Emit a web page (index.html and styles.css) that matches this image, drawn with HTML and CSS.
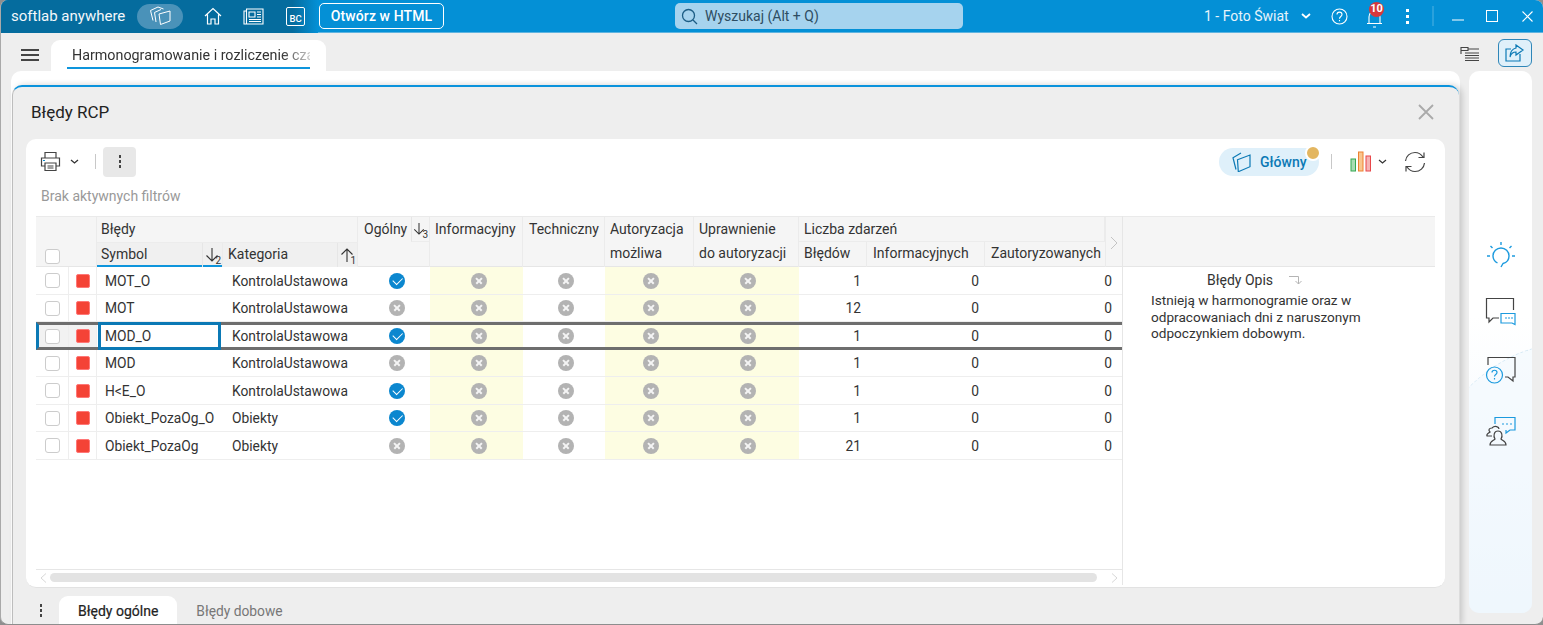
FILE: index.html
```html
<!DOCTYPE html>
<html lang="pl">
<head>
<meta charset="utf-8">
<title>Błędy RCP</title>
<link rel="stylesheet" href="styles.css">
</head>
<body>
<div class="app">
  <header class="titlebar">
    <div class="brand-zone">
      <span class="brand">softlab anywhere</span>
      <span class="pill-icon"><svg width="21" height="20" viewBox="0 0 21 20" fill="none" stroke="#fff" stroke-width="1"><path d="M9 8l11-3v10l-9.500 3.500zM6 16L4.500 6.500 11 3.500M3 14.500L0.500 4.500 8 1l5.500 2"/></svg></span>
      <svg class="ic-home" width="18" height="18" viewBox="0 0 18 18" fill="none" stroke="#fff" stroke-width="1.200"><path d="M1 9l8-7.500L17 9M3.500 7.500V17h3.500v-5h4v5h3.500V7.500"/></svg>
      <svg class="ic-news" width="21" height="17" viewBox="0 0 21 17" fill="none" stroke="#fff" stroke-width="1.100"><path d="M3.500 1H20v15H3.500zM3.500 3H1v13h2.500M6 4h6v5H6zM14 4h4M14 6.500h4M14 9h4M6 11.500h12M6 13.500h12"/></svg>
      <span class="ic-bc">BC</span>
    </div>
    <button class="open-html">Otwórz w HTML</button>
    <div class="search"><svg width="17" height="17" viewBox="0 0 17 17" fill="none" stroke="#1c5d85" stroke-width="1.300"><circle cx="7.500" cy="7.500" r="6"/><path d="M12 12l4 4"/></svg><span>Wyszukaj (Alt + Q)</span></div>
    <span class="company">1 - Foto Świat</span>
    <svg class="ic-chev" width="10" height="6" viewBox="0 0 10 6" fill="none" stroke="#fff" stroke-width="1.800"><path d="M1 1l4 3.500L9 1"/></svg>
    <svg class="ic-help" width="17" height="17" viewBox="0 0 17 17" fill="none" stroke="#fff" stroke-width="1.100"><circle cx="8.500" cy="8.500" r="7.500"/><path d="M6 6.500c0-3.200 5-3.200 5 0 0 2-2.500 2-2.500 4.200M8.500 12v1.300"/></svg>
    <span class="bell"><svg width="18" height="21" viewBox="0 0 18 21" fill="none" stroke="#fff" stroke-width="1.100"><path d="M1 16.500h15M3 16.500V10c0-3.500 2.500-6 5.500-6s5.500 2.500 5.500 6v6.500M7 20h3"/></svg><span class="badge">10</span></span>
    <span class="dots-white"><i></i><i></i><i></i></span>
    <span class="tb-div"></span>
    <svg class="ic-min" width="12" height="2" viewBox="0 0 12 2" stroke="#fff"><path d="M0 1h12"/></svg>
    <svg class="ic-max" width="12" height="12" viewBox="0 0 12 12" fill="none" stroke="#fff"><rect x="0.500" y="0.500" width="11" height="11"/></svg>
    <svg class="ic-close" width="11" height="11" viewBox="0 0 11 11" fill="none" stroke="#fff" stroke-width="1.100"><path d="M0.500 0.500l10 10M10.500 0.500l-10 10"/></svg>
  </header>

  <nav class="tabbar">
    <span class="burger"><i></i><i></i><i></i></span>
    <div class="doc-tab"><span class="doc-tab-text">Harmonogramowanie i rozliczenie czasu</span></div>
    <svg class="ic-tree" width="20" height="18" viewBox="0 0 20 18" fill="none" stroke="#444"><path d="M1 1v7M1 1.500h7v3H1M8 3h11M5 7h14M5 9.500h14M5 12h14M5 14.500h14" stroke-width="1.100"/></svg>
    <button class="share-btn"><svg width="20" height="18" viewBox="0 0 20 18" fill="none" stroke="#0b79b5" stroke-width="1.200"><path d="M15 10v7H1V5h5M11 1l7 5-7 5V8C8 8 6 9.500 5 13c0-5 2-8 6-9z"/></svg></button>
  </nav>

  <main class="workspace">
    <section class="back-panel">
      <div class="modal">
        <div class="modal-head">
          <h1>Błędy RCP</h1>
          <svg width="16" height="16" viewBox="0 0 16 16" fill="none" stroke="#aaa" stroke-width="1.800"><path d="M1 1l14 14M15 1L1 15"/></svg>
        </div>
        <div class="card">
          <div class="toolbar">
            <svg class="ic-print" width="21" height="21" viewBox="0 0 21 21" fill="none" stroke="#444" stroke-width="1.200"><path d="M5 7V1.500h11V7M5 15H1.500V7h18v8H16M5 12h11v7.500H5zM7.500 15h6M7.500 17h6"/><path d="M3 9.500h2" stroke="#0b8bd0"/></svg>
            <svg class="ic-chev-d" width="9" height="5" viewBox="0 0 9 5" fill="none" stroke="#333" stroke-width="1.300"><path d="M1 1l3.500 3L8 1"/></svg>
            <span class="vsep"></span>
            <button class="more"><i></i><i></i><i></i></button>
            <span class="toolbar-gap"></span>
            <span class="glowny"><svg width="20" height="20" viewBox="0 0 20 20" fill="none" stroke="#0b79b5" stroke-width="1.200"><path d="M5.500 7.700L18 3v11.700l-11.700 5zM4 17.500L1 5.700 9 1"/></svg><b>Główny</b><span class="dot"></span></span>
            <span class="vsep vsep-r"></span>
            <svg class="ic-chart" width="22" height="21" viewBox="0 0 22 21"><rect x="1" y="8" width="4.500" height="12" fill="#a8dcb4" stroke="#35a852"/><rect x="8.500" y="1" width="4.500" height="19" fill="#f9c68e" stroke="#ee8130"/><rect x="16" y="5" width="4.500" height="15" fill="#f6b3b3" stroke="#e8474a"/></svg>
            <svg class="ic-chev-c" width="9" height="5" viewBox="0 0 9 5" fill="none" stroke="#333" stroke-width="1.200"><path d="M1 1l3.500 3L8 1"/></svg>
            <svg class="ic-refresh" width="22" height="22" viewBox="0 0 22 22" fill="none" stroke="#444" stroke-width="1.200"><path d="M1.500 10C2 5 6 1.500 11 1.500c3.500 0 6 1.500 8 4.500M20 1.500V6.500h-5.500M20.500 12C20 17 16 20.500 11 20.500c-3.500 0-6-1.500-8-4.500M2 20.500V15.500h5.500"/></svg>
          </div>
          <div class="filters">Brak aktywnych filtrów</div>

          <div class="data-area">
            <div class="grid-pane">
              <div class="thead">
                <div class="th th-corner"><span class="check"></span></div>
                <div class="th th-group th-bledy">Błędy</div>
                <div class="th th-sub th-symbol">Symbol<span class="sort sort-blue"><svg width="14" height="16" viewBox="0 0 14 16" fill="none" stroke="#333" stroke-width="1.100"><path d="M7 1v13M1.500 8.500L7 14l5.500-5.500"/></svg><sub>2</sub></span></div>
                <div class="th th-sub th-kategoria">Kategoria<span class="sort"><svg width="14" height="16" viewBox="0 0 14 16" fill="none" stroke="#333" stroke-width="1.100"><path d="M7 15V2M1.500 7.500L7 2l5.500 5.500"/></svg><sub>1</sub></span></div>
                <div class="th th-ogolny"><span>Ogólny</span><span class="sort sort-top"><svg width="12" height="14" viewBox="0 0 14 16" fill="none" stroke="#333" stroke-width="1.200"><path d="M7 1v13M1.500 8.500L7 14l5.500-5.500"/></svg><sub>3</sub></span></div>
                <div class="th th-tall th-info">Informacyjny</div>
                <div class="th th-tall th-tech">Techniczny</div>
                <div class="th th-tall th-auto">Autoryzacja<br>możliwa</div>
                <div class="th th-tall th-upr">Uprawnienie<br>do autoryzacji</div>
                <div class="th th-group th-liczba">Liczba zdarzeń</div>
                <div class="th th-sub th-n1">Błędów</div>
                <div class="th th-sub th-n2">Informacyjnych</div>
                <div class="th th-sub th-n3">Zautoryzowanych</div>
                <div class="th th-next"><svg width="8" height="14" viewBox="0 0 8 14" fill="none" stroke="#c4c4c4"><path d="M1 1l6 6-6 6"/></svg></div>
              </div>

              <div class="tbody">
                <div class="tr">
                  <span class="td c-check"><span class="check"></span></span><span class="td c-red"><i></i></span><span class="td c-sym">MOT_O</span><span class="td c-kat">KontrolaUstawowa</span>
                  <span class="td c-ic c-ogo"><i class="ok"></i></span><span class="td c-ic y c-inf"><i class="no"></i></span><span class="td c-ic c-tec"><i class="no"></i></span><span class="td c-ic y c-aut"><i class="no"></i></span><span class="td c-ic y c-aut"><i class="no"></i></span>
                  <span class="td num">1</span><span class="td num">0</span><span class="td num last">0</span>
                </div>
                <div class="tr">
                  <span class="td c-check"><span class="check"></span></span><span class="td c-red"><i></i></span><span class="td c-sym">MOT</span><span class="td c-kat">KontrolaUstawowa</span>
                  <span class="td c-ic c-ogo"><i class="no"></i></span><span class="td c-ic y c-inf"><i class="no"></i></span><span class="td c-ic c-tec"><i class="no"></i></span><span class="td c-ic y c-aut"><i class="no"></i></span><span class="td c-ic y c-aut"><i class="no"></i></span>
                  <span class="td num">12</span><span class="td num">0</span><span class="td num last">0</span>
                </div>
                <div class="tr tr-selected">
                  <span class="td c-check"><span class="check"></span></span><span class="td c-red"><i></i></span><span class="td c-sym focus">MOD_O</span><span class="td c-kat">KontrolaUstawowa</span>
                  <span class="td c-ic c-ogo"><i class="ok"></i></span><span class="td c-ic y c-inf"><i class="no"></i></span><span class="td c-ic c-tec"><i class="no"></i></span><span class="td c-ic y c-aut"><i class="no"></i></span><span class="td c-ic y c-aut"><i class="no"></i></span>
                  <span class="td num">1</span><span class="td num">0</span><span class="td num last">0</span>
                </div>
                <div class="tr">
                  <span class="td c-check"><span class="check"></span></span><span class="td c-red"><i></i></span><span class="td c-sym">MOD</span><span class="td c-kat">KontrolaUstawowa</span>
                  <span class="td c-ic c-ogo"><i class="no"></i></span><span class="td c-ic y c-inf"><i class="no"></i></span><span class="td c-ic c-tec"><i class="no"></i></span><span class="td c-ic y c-aut"><i class="no"></i></span><span class="td c-ic y c-aut"><i class="no"></i></span>
                  <span class="td num">1</span><span class="td num">0</span><span class="td num last">0</span>
                </div>
                <div class="tr">
                  <span class="td c-check"><span class="check"></span></span><span class="td c-red"><i></i></span><span class="td c-sym">H&lt;E_O</span><span class="td c-kat">KontrolaUstawowa</span>
                  <span class="td c-ic c-ogo"><i class="ok"></i></span><span class="td c-ic y c-inf"><i class="no"></i></span><span class="td c-ic c-tec"><i class="no"></i></span><span class="td c-ic y c-aut"><i class="no"></i></span><span class="td c-ic y c-aut"><i class="no"></i></span>
                  <span class="td num">1</span><span class="td num">0</span><span class="td num last">0</span>
                </div>
                <div class="tr">
                  <span class="td c-check"><span class="check"></span></span><span class="td c-red"><i></i></span><span class="td c-sym">Obiekt_PozaOg_O</span><span class="td c-kat">Obiekty</span>
                  <span class="td c-ic c-ogo"><i class="ok"></i></span><span class="td c-ic y c-inf"><i class="no"></i></span><span class="td c-ic c-tec"><i class="no"></i></span><span class="td c-ic y c-aut"><i class="no"></i></span><span class="td c-ic y c-aut"><i class="no"></i></span>
                  <span class="td num">1</span><span class="td num">0</span><span class="td num last">0</span>
                </div>
                <div class="tr">
                  <span class="td c-check"><span class="check"></span></span><span class="td c-red"><i></i></span><span class="td c-sym">Obiekt_PozaOg</span><span class="td c-kat">Obiekty</span>
                  <span class="td c-ic c-ogo"><i class="no"></i></span><span class="td c-ic y c-inf"><i class="no"></i></span><span class="td c-ic c-tec"><i class="no"></i></span><span class="td c-ic y c-aut"><i class="no"></i></span><span class="td c-ic y c-aut"><i class="no"></i></span>
                  <span class="td num">21</span><span class="td num">0</span><span class="td num last">0</span>
                </div>
              </div>

              <div class="hscroll">
                <svg width="7" height="10" viewBox="0 0 7 10" fill="none" stroke="#d8d8d8"><path d="M6 0.500L1 5l5 4.500"/></svg>
                <span class="thumb"></span>
                <svg width="7" height="10" viewBox="0 0 7 10" fill="none" stroke="#d8d8d8"><path d="M1 0.500L6 5 1 9.500"/></svg>
              </div>
            </div>

            <aside class="desc-pane">
              <div class="desc-head"></div>
              <div class="desc-title">Błędy Opis<svg width="14" height="10" viewBox="0 0 14 10" fill="none" stroke="#b4b4b4"><path d="M0 1.500h9.500V9M6.500 6l3 3 3-3"/></svg></div>
              <p class="desc-text">Istnieją w harmonogramie oraz w odpracowaniach dni z naruszonym odpoczynkiem dobowym.</p>
            </aside>
          </div>
        </div>
        <div class="sheet-tabs">
          <span class="dots-dark"><i></i><i></i><i></i></span>
          <span class="sheet-tab active">Błędy ogólne</span>
          <span class="sheet-tab">Błędy dobowe</span>
        </div>
      </div>
    </section>

    <aside class="side-panel">
      <span class="side-arc"></span>
      <svg class="side-icon s1" width="30" height="28" viewBox="0 0 30 28" fill="none" stroke="#1c9ade" stroke-width="1.400"><path d="M15 26l2-3.500c4-1 6-4 6-7.500a8 8 0 0 0-16 0c0 3 1.700 5.500 4.500 7"/><path d="M15 1v3M4.500 5l2 2M25.500 5l-2 2M1 15h3M26 15h3"/></svg>
      <svg class="side-icon s2" width="31" height="30" viewBox="0 0 31 30" fill="none" stroke-width="1.200"><path d="M14 21H8l-4 4v-4H1.500V1.500h27V13" stroke="#444"/><path d="M16 16.500h14v11l-3-1.500H16z" stroke="#1c9ade"/><path d="M20 21h2M23 21h2M26 21h2" stroke="#1c9ade"/></svg>
      <svg class="side-icon s3" width="31" height="30" viewBox="0 0 31 30" fill="none" stroke-width="1.200"><path d="M3 9V1.500h27V21h-2v4l-5-4h-3" stroke="#444"/><circle cx="9.500" cy="19" r="8" stroke="#1c9ade"/><path d="M7 16.500c0-3 5-3 5 0 0 2-2.500 2-2.500 4M9.500 22v1.500" stroke="#1c9ade"/></svg>
      <svg class="side-icon s4" width="31" height="30" viewBox="0 0 31 30" fill="none" stroke-width="1.200"><path d="M10 8V1.500h20V14h-5l-4 3v-3" stroke="#1c9ade"/><path d="M17 8h2M21 8h2M25 8h2" stroke="#1c9ade"/><path d="M7 12c3-3 7-1 7 1M7 20H2c-1-2 2-3 3-4-2-2-1-4 2-4M11 29H21c0-4-3-4-5-6 2-3 1-8-3-8s-5 5-3 8c-2 2-5 2-5 6z" stroke="#444"/></svg>
    </aside>
  </main>
</div>
</body>
</html>
```

FILE: styles.css
```css
* { box-sizing: border-box; }
html, body { margin: 0; height: 100%; overflow: hidden; background: #8f8f8f; }
body { font-family: Roboto, "Noto Sans", sans-serif; color: #333; font-size: 14px; }
button { font: inherit; cursor: default; }
svg { display: block; flex: none; }

.app {
  width: 1543px; height: 625px; overflow: hidden; background: #eee;
  border-radius: 8px; display: flex; flex-direction: column;
  border-bottom: 1px solid #8d8d8d; border-left: 1px solid #a9a9a9;
}

/* title bar */
.titlebar {
  height: 33px; flex: none; background: #0490d6; color: #fff;
  display: flex; align-items: center; border-bottom: 1px solid #5fb4e0; margin-left: -1px;
}
.brand-zone {
  width: 318px; height: 33px; display: flex; align-items: center; padding-left: 11px;
  background: linear-gradient(90deg, #056c9e 0, #056c9e 92%, #0490d6 100%);
}
.brand { font-size: 15px; width: 115px; white-space: nowrap; color: #f3f8fb; }
.pill-icon { width: 46px; height: 25px; border-radius: 13px; background: #4a92b9; margin-left: 11px; display: flex; align-items: center; justify-content: center; }
.ic-home { margin-left: 21px; }
.ic-news { margin-left: 21px; }
.ic-bc { margin-left: 22px; width: 19px; height: 19px; border: 1px solid #fff; border-radius: 2px; font-size: 9.500px; font-weight: 500; display: flex; align-items: flex-end; justify-content: center; padding-bottom: 1px; color: #fff; line-height: 11px; }
.open-html {
  width: 125px; height: 26px; margin-left: 1px; background: transparent; color: #fff;
  border: 1px solid #fff; border-radius: 5px; font-weight: 500; font-size: 14px; padding: 0; letter-spacing: .1px;
}
.search {
  width: 288px; height: 26px; margin-left: 231px; border-radius: 5px; background: #a6d3ee;
  display: flex; align-items: center; padding-left: 6px; gap: 7px; color: #2d4d62; font-size: 14px;
}
.company { margin-left: 241px; width: 83px; font-size: 14px; white-space: nowrap; color: #e8f4fb; }
.ic-chev { margin-left: 14px; }
.ic-help { margin-left: 20px; }
.bell { position: relative; margin-left: 18px; width: 18px; height: 21px; margin-top: 2px; }
.badge {
  position: absolute; left: 3px; top: -5px; width: 15px; height: 15px; border-radius: 50%;
  background: #d5383d; color: #fff; font-size: 11px; font-weight: 700; line-height: 14px; text-align: center;
}
.dots-white { margin-left: 22px; display: flex; flex-direction: column; gap: 3px; }
.dots-white i { width: 3px; height: 3px; background: #fff; display: block; }
.tb-div { width: 2px; height: 20px; background: #2aa1dc; margin-left: 23px; }
.ic-min { margin-left: 18px; margin-top: 8px; }
.ic-max { margin-left: 22px; margin-top: -1px; }
.ic-close { margin-left: 24px; margin-top: 0; }

/* second bar */
.tabbar { height: 38px; flex: none; display: flex; align-items: flex-end; position: relative; z-index: 1; }
.burger { width: 18px; margin-left: 20px; margin-bottom: 10px; display: flex; flex-direction: column; gap: 3px; }
.burger i { display: block; height: 2px; background: #444; }
.doc-tab { width: 275px; height: 31px; margin-left: 12px; background: #fff; border-radius: 9px 9px 0 0; padding: 0 16px; position: relative; }
.doc-tab-text {
  display: block; height: 29px; line-height: 30px; padding-left: 5px; white-space: nowrap; overflow: hidden;
  color: #333; font-size: 14.300px;
  -webkit-mask-image: linear-gradient(90deg, #000 88%, rgba(0,0,0,.25) 100%); mask-image: linear-gradient(90deg, #000 88%, rgba(0,0,0,.25) 100%);
}
.doc-tab::after { content: ""; position: absolute; left: 16px; right: 16px; top: 27px; height: 2px; background: #0e95dc; }
.ic-tree { margin-left: 1134px; margin-bottom: 7px; }
.share-btn { width: 34px; height: 28px; margin-left: 18px; margin-bottom: 4px; padding: 0; background: #e0f0fa; border: 1px solid #2f86b8; border-radius: 6px; display: flex; align-items: center; justify-content: center; }

/* workspace */
.workspace { flex: 1; display: flex; padding-left: 10px; min-height: 0; }
.back-panel { width: 1449px; height: 100%; background: #fff; border-radius: 10px 10px 0 0; position: relative; }
.modal {
  position: absolute; left: 1px; top: 14px; width: 1447px; height: 540px;
  background: #eee; border-top: 2px solid #0b93dc; border-radius: 10px 10px 0 0; border-left: 1px solid #bdbdbd;
  box-shadow: 3px 0 6px rgba(0,0,0,.18); display: flex; flex-direction: column;
}
.modal-head { height: 52px; flex: none; display: flex; align-items: center; justify-content: space-between; padding: 0 25px 2px 18px; }
.modal-head h1 { margin: 0; font-size: 17px; font-weight: 400; color: #222; }
.card { width: 1419px; height: 449px; margin-left: 13px; background: #fff; border-radius: 10px; border-bottom: 1px solid #e2e2e2; padding: 8px 10px 0; flex: none; }

.toolbar { height: 29px; display: flex; align-items: center; padding-left: 4px; }
.ic-chev-d { margin-left: 9px; }
.vsep { width: 1px; height: 15px; background: #c8c8c8; margin-left: 16px; }
.more { width: 33px; height: 30px; margin-left: 7px; border: 0; background: #e8e8e8; border-radius: 4px; display: flex; flex-direction: column; align-items: center; justify-content: center; gap: 2px; padding: 0; }
.more i, .dots-dark i { width: 2px; height: 3px; background: #444; display: block; }
.toolbar-gap { flex: 1; }
.glowny { width: 100px; height: 28px; background: #dff0fa; border-radius: 14px; display: flex; align-items: center; padding-left: 13px; gap: 8px; color: #0b79b5; position: relative; }
.glowny b { font-weight: 500; font-size: 14px; }
.dot { position: absolute; right: -2px; top: -3px; width: 16px; height: 16px; background: #e3b660; border: 2px solid #fff; border-radius: 50%; }
.vsep-r { margin-left: 12px; }
.ic-chart { margin-left: 18px; }
.ic-chev-c { margin-left: 6px; }
.ic-refresh { margin-left: 17px; margin-right: 9px; }
.filters { height: 40px; padding: 12px 0 0 5px; font-size: 14px; color: #999; line-height: 16px; }

/* table */
.data-area { display: flex; width: 1399px; height: 369px; }
.grid-pane { width: 1086px; display: flex; flex-direction: column; flex: none; }
.tr {
  display: grid; height: 27.500px; position: relative;
  grid-template-columns: 33px 28px 126px 135px 72px 93px 82px 89px 105px 68px 118px 137px;
}
.thead {
  display: grid;
  grid-template-columns: 33px 28px 126px 135px 72px 93px 82px 89px 105px 68px 118px 120px 17px;
  grid-template-rows: 25px 25px; background: #f5f5f5; border-top: 1px solid #eaeaea; border-bottom: 1px solid #e6e6e6; height: 51px; flex: none;
}
.th { padding-left: 5px; line-height: 24px; color: #333; white-space: nowrap; border-right: 1px solid #ebebeb; font-size: 14px; position: relative; }
.th-sub { line-height: 22px; }
.th-corner { grid-column: 1 / 3; grid-row: 1 / 3; padding: 32px 0 0 9px; }
.th-bledy { grid-column: 3 / 5; grid-row: 1; padding-left: 4px; }
.th-symbol { grid-column: 3; grid-row: 2; border-top: 1px solid #ececec; box-shadow: inset 0 -2px 0 #0e95dc; background: #f0f0f0; padding-left: 4px; }
.th-kategoria { grid-column: 4; grid-row: 2; border-top: 1px solid #ececec; background: #f0f0f0; }
.th-ogolny { grid-column: 5; grid-row: 1 / 3; padding-left: 6px; }
.th-info { grid-column: 6; }
.th-tech { grid-column: 7; padding-left: 6px; }
.th-auto { grid-column: 8; }
.th-upr { grid-column: 9; padding-left: 5px; }
.th-tall { grid-row: 1 / 3; }
.th-liczba { grid-column: 10 / 13; grid-row: 1; border-bottom: 1px solid #ececec; }
.th-n1 { grid-column: 10; grid-row: 2; }
.th-n2 { grid-column: 11; grid-row: 2; padding-left: 6px; }
.th-n3 { grid-column: 12; grid-row: 2; border-right: 0; padding-left: 6px; }
.th-next { grid-column: 13; grid-row: 1 / 3; border-left: 1px solid #ebebeb; border-right: 0; padding: 19px 0 0 4px; }
.sort { position: absolute; right: 0; top: 0; width: 20px; height: 24px; background: #f0f0f0; border-left: 1px solid #e6e6e6; padding: 4px 0 0 2px; }
.sort-blue { box-shadow: inset 0 -2px 0 #0e95dc; }
.sort-top { width: 18px; height: 25px; background: #f5f5f5; border-bottom: 1px solid #ececec; padding: 5px 0 0 1px; }
.sort sub { position: absolute; right: 1px; bottom: 1px; font-size: 10px; line-height: 10px; color: #333; }
.check { display: block; width: 15px; height: 15px; border: 1px solid #ccc; border-radius: 3px; background: #fff; }

.td { display: flex; align-items: center; height: 100%; border-bottom: 1px solid #eee; padding-top: 1px; font-size: 13.800px; color: #333; white-space: nowrap; min-width: 0; }
.c-check { justify-content: center; border-right: 1px solid #eee; padding-left: 1px; }
.c-red { justify-content: center; border-right: 1px solid #eee; }
.c-red i { width: 14px; height: 14px; background: #f44336; border-radius: 2px; border: 1px solid #f77; display: block; }
.c-sym { padding-left: 8px; }
.c-kat { padding-left: 9px; }
.c-ic { justify-content: center; }
.c-ogo { padding-left: 6px; }
.c-inf { padding-left: 5px; }
.c-tec { padding-left: 4px; }
.c-aut { padding-left: 2px; }
.c-ic i { width: 16px; height: 16px; border-radius: 50%; display: block; position: relative; }
.c-ic .ok { background: #0b87cf; }
.c-ic .ok::after { content: ""; position: absolute; left: 4px; top: 4px; width: 8px; height: 4.500px; border-left: 1.700px solid #fff; border-bottom: 1.700px solid #fff; transform: rotate(-45deg); }
.c-ic .no { background: #b3b3b3; }
.c-ic .no::before, .c-ic .no::after { content: ""; position: absolute; left: 4px; top: 7px; width: 8px; height: 1.700px; background: #f4f4f4; transform: rotate(45deg); }
.c-ic .no::after { transform: rotate(-45deg); }
.y { background: #fdfde2; }
.num { justify-content: flex-end; padding-right: 6px; }
.last { padding-right: 10px; }

.tr-selected .td { border-bottom: 0; }
.tr-selected .c-check, .tr-selected .c-red { background: #f2f2f2; }
.tr-selected::after {
  content: ""; position: absolute; inset: 0; pointer-events: none;
  border-top: 3px solid #6e6e6e; border-bottom: 3px solid #6e6e6e; border-left: 3px solid #0b79b5;
}
.focus { position: relative; }
.focus::after { content: ""; position: absolute; left: 1px; right: 2px; top: 0; bottom: 0; border: 3px solid #0b79b5; z-index: 1; }

.hscroll { margin-top: auto; height: 16px; border-top: 1px solid #e6e6e6; display: flex; align-items: center; padding: 0 4px; flex: none; }
.thumb { width: 1047px; height: 9px; background: #e3e3e3; border-radius: 5px; margin: 0 auto 0 3px; }

.desc-pane { flex: 1; border-left: 1px solid #e6e6e6; }
.desc-head { height: 51px; background: #f5f5f5; border-top: 1px solid #eaeaea; border-bottom: 1px solid #e6e6e6; }
.desc-title { display: flex; align-items: center; gap: 16px; height: 24px; padding: 1px 0 0 84px; font-size: 14px; color: #333; }
.desc-text { margin: 1px 0 0 28px; width: 230px; font-size: 13.600px; line-height: 16.500px; color: #333; }

/* bottom tabs */
.sheet-tabs { flex: 1; display: flex; align-items: flex-end; padding-left: 27px; }
.dots-dark { display: flex; flex-direction: column; gap: 2px; width: 2px; margin-bottom: 8px; }
.sheet-tab { height: 29px; padding: 0 19px; line-height: 31px; font-size: 13.800px; color: #777; }
.sheet-tab.active { background: #fff; color: #222; font-weight: 400; font-size: 14px; border-radius: 9px 9px 0 0; margin-left: 17px; -webkit-text-stroke: .2px #222; }

/* right panel */
.side-panel {
  width: 63px; height: 542px; margin-left: 9px; flex: none; position: relative; overflow: hidden;
  background: linear-gradient(#fff 0, #fff 45%, #eef6fd 100%); border-radius: 10px; z-index: 0;
  display: flex; flex-direction: column; align-items: center;
}
.side-arc { position: absolute; left: -60px; top: 272px; width: 320px; height: 400px; border-radius: 50%; border-top: 1px dashed #d6e9f5; background: rgba(240,248,253,.5); }
.side-icon { position: relative; }
.s1 { margin-top: 170px; }
.s2 { margin-top: 28px; }
.s3 { margin-top: 29px; }
.s4 { margin-top: 30px; }
```
